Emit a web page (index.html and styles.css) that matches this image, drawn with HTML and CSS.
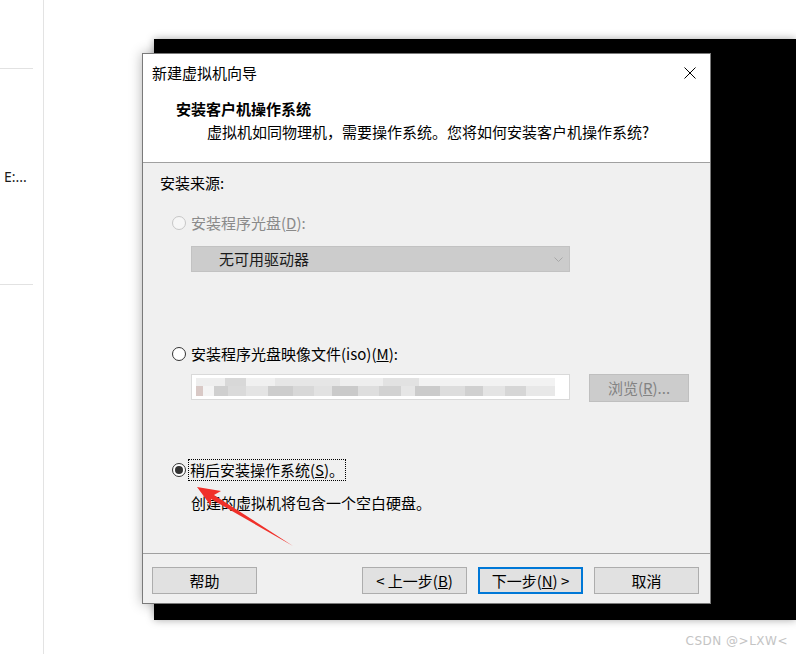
FILE: index.html
```html
<!DOCTYPE html>
<html lang="zh-CN">
<head>
    <meta charset="UTF-8">
    <title>新建虚拟机向导</title>
    <link rel="stylesheet" href="styles.css">
</head>
<body>
    <div class="desktop">
        <aside class="sidebar">
            <div class="side-item">E:...</div>
        </aside>

        <div class="backdrop-window"></div>

        <div class="wizard">
            <div class="titlebar">
                <span>新建虚拟机向导</span>
                <div class="close">
                    <svg width="12" height="12" viewBox="0 0 12 12">
                        <path d="M0.5 0.5 L11.5 11.5 M11.5 0.5 L0.5 11.5" stroke="#000" stroke-width="1" fill="none"/>
                    </svg>
                </div>
            </div>

            <div class="header">
                <div class="header-title">安装客户机操作系统</div>
                <div class="header-sub">虚拟机如同物理机，需要操作系统。您将如何安装客户机操作系统?</div>
            </div>

            <div class="content">
                <div class="group-label">安装来源:</div>

                <div class="option disabled option-disc">
                    <span class="radio"></span>
                    <span>安装程序光盘(<u>D</u>):</span>
                </div>
                <div class="combo">
                    <span>无可用驱动器</span>
                    <svg class="chevron" width="9" height="5" viewBox="0 0 9 5">
                        <path d="M0.5 0.5 L4.5 4.5 L8.5 0.5" stroke="#a8a8a8" fill="none"/>
                    </svg>
                </div>

                <div class="option option-iso">
                    <span class="radio"></span>
                    <span>安装程序光盘映像文件(iso)(<u>M</u>):</span>
                </div>
                <div class="iso-row">
                    <div class="iso-path"><div class="blur"></div></div>
                    <button class="btn btn-disabled">浏览(<u>R</u>)...</button>
                </div>

                <div class="option option-later">
                    <span class="radio checked"></span>
                    <span class="focus">稍后安装操作系统(<u>S</u>)。</span>
                </div>
                <div class="note">创建的虚拟机将包含一个空白硬盘。</div>
            </div>

            <div class="footer">
                <button class="btn">帮助</button>
                <div class="footer-right">
                    <button class="btn">&lt; 上一步(<u>B</u>)</button>
                    <button class="btn btn-default">下一步(<u>N</u>) &gt;</button>
                    <button class="btn">取消</button>
                </div>
            </div>
        </div>

        <svg class="arrow" width="796" height="654" viewBox="0 0 796 654">
            <polygon points="197,487 221,491 214,495 293,546 211,499 211,506" fill="#f0302a"/>
        </svg>

        <div class="watermark">CSDN @&gt;LXW&lt;</div>
    </div>
</body>
</html>
```

FILE: styles.css
```css
body {
    margin: 0;
    background-color: #ffffff;
    font-family: "Noto Sans CJK SC", sans-serif;
    font-size: 15px;
    color: #000000;
}

.desktop {
    position: relative;
    width: 796px;
    height: 654px;
    overflow: hidden;
}

/* left explorer strip */
.sidebar {
    width: 43px;
    height: 654px;
    border-right: 1px solid #e3e3e3;
    box-sizing: border-box;
    width: 44px;
    padding-top: 68px;
}

.side-item {
    width: 33px;
    height: 217px;
    box-sizing: border-box;
    border-top: 1px solid #e2e2e2;
    border-bottom: 1px solid #e2e2e2;
    display: flex;
    align-items: center;
    padding-left: 4px;
    font-family: "Noto Sans", sans-serif;
    font-size: 14px;
    color: #1a1a1a;
}

/* black window behind the wizard */
.backdrop-window {
    position: absolute;
    left: 154px;
    top: 39px;
    right: 0;
    height: 581px;
    background-color: #000000;
    box-shadow: 0 0 8px rgba(0,0,0,0.35);
}

.wizard {
    position: absolute;
    left: 142px;
    top: 53px;
    width: 569px;
    height: 551px;
    box-sizing: border-box;
    border: 1px solid #7a7a7a;
    background-color: #f0f0f0;
    box-shadow: 0 0 12px rgba(0,0,0,0.3);
    display: flex;
    flex-direction: column;
}

.titlebar {
    height: 37px;
    background-color: #ffffff;
    display: flex;
    align-items: center;
    justify-content: space-between;
    padding-left: 9px;
    line-height: 20px;
}

.close {
    width: 40px;
    height: 37px;
    display: flex;
    align-items: center;
    justify-content: center;
}

.header {
    height: 72px;
    box-sizing: border-box;
    background-color: #ffffff;
    border-bottom: 1px solid #a0a0a0;
    padding: 8px 0 0 33px;
    line-height: 20px;
}

.header-title {
    font-weight: bold;
}

.header-sub {
    margin-top: 3px;
    margin-left: 31px;
}

.content {
    flex: 1;
    padding: 10px 0 0 17px;
    line-height: 20px;
}

.option {
    display: flex;
    align-items: center;
    gap: 5px;
    margin-left: 12px;
}

.option-disc {
    margin-top: 20px;
}

.option-iso {
    margin-top: 72px;
}

.option-later {
    margin-top: 58px;
}

.disabled {
    color: #8a8a8a;
}

.radio {
    width: 14px;
    height: 14px;
    box-sizing: border-box;
    border: 1px solid #333333;
    border-radius: 50%;
    background-color: #ffffff;
    position: relative;
}

.disabled .radio {
    border-color: #c6c6c6;
    background-color: #f6f6f6;
}

.radio.checked::after {
    content: "";
    position: absolute;
    left: 2px;
    top: 2px;
    width: 8px;
    height: 8px;
    border-radius: 50%;
    background-color: #333333;
}

.focus {
    outline: 1px dotted #000000;
    outline-offset: 0;
    padding: 0 1px;
    margin-left: -2px;
}

.combo {
    width: 379px;
    height: 26px;
    box-sizing: border-box;
    margin: 13px 0 0 31px;
    background-color: #cccccc;
    border: 1px solid #c2c2c2;
    display: flex;
    align-items: center;
    justify-content: space-between;
    padding: 0 6px 0 27px;
    color: #1a1a1a;
}

.iso-row {
    display: flex;
    gap: 19px;
    margin: 10px 0 0 31px;
    align-items: flex-start;
}

.iso-path {
    width: 379px;
    height: 26px;
    box-sizing: border-box;
    border: 1px solid #d9d9d9;
    background-color: #ffffff;
    padding: 3px 14px 3px 4px;
}

.blur {
    height: 18px;
    background:
        linear-gradient(90deg, #eeeeee 0 8%, #d8d8d8 8% 14%, #f0f0f0 14% 22%, #e6e6e6 22% 40%, #eeeeee 40% 52%, #e2e2e2 52% 62%, #f2f2f2 62% 100%) top / 100% 8px no-repeat,
        linear-gradient(90deg, #d9c9c6 0 2%, #f4f4f4 2% 5%, #cfcfcf 5% 9%, #dadada 9% 14%, #e4e4e4 14% 20%, #cdcdcd 20% 27%, #d8d8d8 27% 33%, #e2e2e2 33% 38%, #cacaca 38% 45%, #dedede 45% 51%, #d2d2d2 51% 57%, #e6e6e6 57% 61%, #cbcbcb 61% 68%, #dddddd 68% 75%, #d0d0d0 75% 80%, #e4e4e4 80% 86%, #d6d6d6 86% 92%, #e8e8e8 92% 100%) bottom / 100% 10px no-repeat;
}

.btn {
    width: 105px;
    height: 27px;
    box-sizing: border-box;
    border: 1px solid #adadad;
    background-color: #e1e1e1;
    font-family: "Noto Sans CJK SC", sans-serif;
    font-size: 15px;
    color: #000000;
    padding: 0;
    line-height: 20px;
}

.btn-disabled {
    width: 100px;
    height: 28px;
    background-color: #cccccc;
    border-color: #bfbfbf;
    color: #838383;
}

.btn-default {
    border: 2px solid #0078d7;
}

.note {
    margin: 13px 0 0 31px;
}

.footer {
    height: 50px;
    box-sizing: border-box;
    border-top: 1px solid #a0a0a0;
    display: flex;
    justify-content: space-between;
    align-items: flex-start;
    padding: 13px 11px 0 9px;
}

.footer-right {
    display: flex;
    gap: 11px;
}

.arrow {
    position: absolute;
    left: 0;
    top: 0;
    pointer-events: none;
}

.watermark {
    position: absolute;
    right: 8px;
    bottom: 6px;
    font-family: "DejaVu Sans", sans-serif;
    font-size: 12px;
    color: #c4c4c4;
    letter-spacing: 0.5px;
}
```
